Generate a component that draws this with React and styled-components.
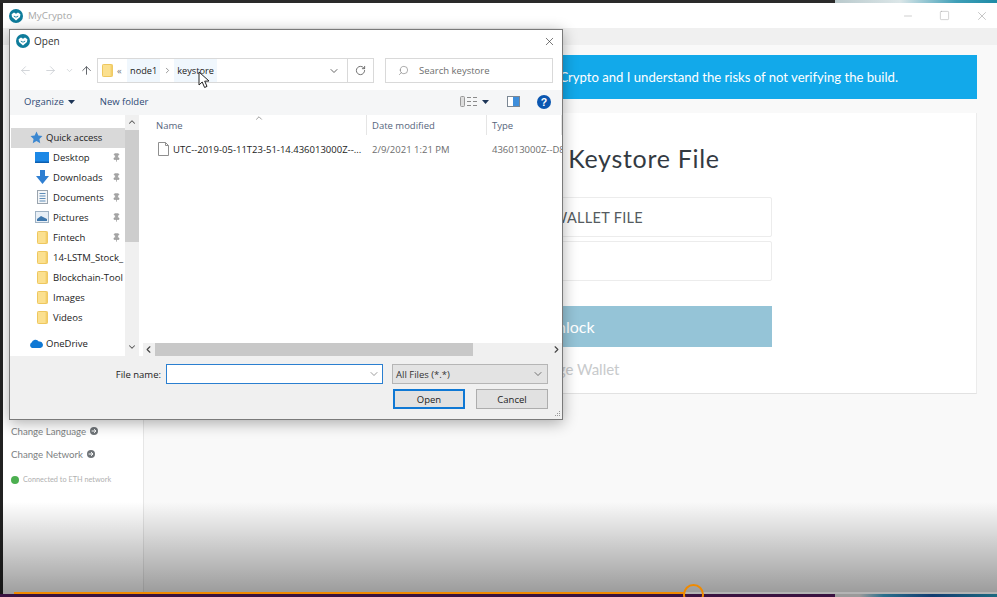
import React from 'react'
import styled, { createGlobalStyle } from 'styled-components'
import { ArrowLeft, ArrowRight, ArrowUp, ChevronDown, ChevronUp, ChevronLeft, ChevronRight, RotateCw, Search, X, Minus, Square, Pin } from 'lucide-react'

const Global = createGlobalStyle`
  html, body { margin: 0; padding: 0; background: #222; }
  * { box-sizing: border-box; }
  svg { flex: none; }
`

const Logo = ({ size = 14 }) => (
  <svg width={size} height={size} viewBox="0 0 14 14">
    <circle cx="7" cy="7" r="7" fill="#0e7c9b" />
    <path d="M2.6 5.2 L5 3.6 L7 4.8 L9 3.6 L11.4 5.2 L11 8 L7 11.4 L3 8 Z" fill="#fff" />
    <path d="M4.8 6.6 Q7 8.8 9.2 6.6 L9.2 7.6 Q7 9.6 4.8 7.6 Z" fill="#0e7c9b" />
  </svg>
)

const Folder = ({ w = 11, h = 13 }) => (
  <svg width={w} height={h} viewBox="0 0 11 13">
    <rect x="0.5" y="0.5" width="10" height="12" rx="0.8" fill="#fbe08f" stroke="#eec75e" />
    <rect x="8.6" y="1" width="1.8" height="11" fill="#f3cf6c" />
  </svg>
)

const Star = () => (
  <svg width="13" height="13" viewBox="0 0 24 24"><path d="M12 1 L15.4 8.4 L23 9.3 L17.4 14.6 L18.9 22.5 L12 18.5 L5.1 22.5 L6.6 14.6 L1 9.3 L8.6 8.4 Z" fill="#3b87d0" /></svg>
)
const DesktopIcon = () => (
  <svg width="14" height="11" viewBox="0 0 14 11"><rect width="14" height="11" fill="#1c88e6" /><rect y="9.5" width="14" height="1.5" fill="#0c5fb0" /></svg>
)
const DownloadIcon = () => (
  <svg width="13" height="14" viewBox="0 0 13 14"><path d="M4 0 H9 V6 H13 L6.5 14 L0 6 H4 Z" fill="#2f7fd2" /></svg>
)
const DocIcon = () => (
  <svg width="11" height="14" viewBox="0 0 11 14"><rect x="0.5" y="0.5" width="10" height="13" fill="#f4f6f8" stroke="#9aa4ae" /><path d="M2.5 3.5H8.5M2.5 6H8.5M2.5 8.5H8.5M2.5 11H8.5" stroke="#5f8db8" /></svg>
)
const PictureIcon = () => (
  <svg width="14" height="12" viewBox="0 0 14 12"><rect x="0.5" y="0.5" width="13" height="11" fill="#e8eff6" stroke="#9fb2c4" /><path d="M2 8 L6 5 L12 8 V10 H2 Z" fill="#3f78ad" /></svg>
)
const CloudIcon = () => (
  <svg width="14" height="9" viewBox="0 0 14 9"><path d="M3 9 A3 3 0 0 1 2.6 3.6 A4 4 0 0 1 9.8 2.6 A3.2 3.2 0 0 1 11.4 9 Z" fill="#0f78d4" /></svg>
)
const FileIcon = () => (
  <svg width="11" height="14" viewBox="0 0 11 14"><path d="M0.5 0.5 H7.5 L10.5 3.5 V13.5 H0.5 Z" fill="#fff" stroke="#8f8f8f" /><path d="M7.5 0.5 V3.5 H10.5" fill="none" stroke="#8f8f8f" /></svg>
)
const Caret = () => (
  <svg width="7" height="4" viewBox="0 0 7 4"><path d="M0 0 H7 L3.5 4 Z" fill="#1d3557" /></svg>
)
const ViewsIcon = () => (
  <svg width="17" height="11" viewBox="0 0 17 11">
    <rect x="0.5" y="0.5" width="4" height="10" rx="1" fill="#ddd" stroke="#999" />
    <path d="M7 1.5H11M7 5.5H11M7 9.5H11M13 1.5H17M13 5.5H17M13 9.5H17" stroke="#8a8a8a" />
  </svg>
)
const PaneIcon = () => (
  <svg width="13" height="11" viewBox="0 0 13 11"><rect x="0.5" y="0.5" width="12" height="10" fill="#fff" stroke="#7b8794" /><rect x="6" y="1" width="6" height="9" fill="#3f8fdc" /></svg>
)
const HelpIcon = () => (
  <svg width="14" height="14" viewBox="0 0 14 14">
    <circle cx="7" cy="7" r="7" fill="#0a56b0" />
    <text x="7" y="11" textAnchor="middle" fontSize="10.5" fontWeight="700" fontFamily="Liberation Sans, sans-serif" fill="#fff">?</text>
  </svg>
)
const Grip = () => (
  <svg width="7" height="7" viewBox="0 0 7 7"><path d="M5 0h1v1H5zM3 2h1v1H3zM5 2h1v1H5zM1 4h1v1H1zM3 4h1v1H3zM5 4h1v1H5z" fill="#9a9a9a" /></svg>
)
const CursorIcon = () => (
  <svg width="13" height="18" viewBox="0 0 13 18"><path d="M1 1 V14 L4.2 11 L6.6 16.5 L9 15.4 L6.7 10.2 L11 10 Z" fill="#fff" stroke="#222" strokeWidth="1" /></svg>
)
const ArrowCircle = () => (
  <svg width="8" height="8" viewBox="0 0 8 8"><circle cx="4" cy="4" r="4" fill="#6f7478" /><path d="M1.6 4H5.6M4 2.2L6 4L4 5.8" stroke="#fff" fill="none" strokeWidth="1" /></svg>
)

const Page = styled.div`
  position: relative;
  width: 997px;
  height: 597px;
  overflow: hidden;
  display: flex;
  flex-direction: column;
  background: #222;
`
const TopStrip = styled.div`
  height: 3px;
  display: flex;
  background: #2a2a2a;
  flex: none;
`
const TopPicture = styled.div`
  margin-left: auto;
  width: 162px;
  background: linear-gradient(90deg, #b9c9cc, #dbe6e8 40%, #3f9fb8 75%, #1d8aa5);
`
const Middle = styled.div`
  flex: 1;
  display: flex;
  min-height: 0;
  padding-left: 3px;
`
const AppWindow = styled.div`
  flex: 1;
  display: flex;
  flex-direction: column;
  background: #fff;
  font-family: Lato, sans-serif;
`
const AppTitle = styled.div`
  height: 25px;
  flex: none;
  display: flex;
  align-items: center;
  padding-left: 6px;
  gap: 5px;
  font-family: "Open Sans", sans-serif;
  font-size: 9.8px;
  color: #a8a8a8;
`
const WindowButtons = styled.div`
  margin-left: auto;
  display: flex;
  align-items: center;
  gap: 25px;
  padding-right: 8px;
  color: #9c9c9c;
`
const MenuStripe = styled.div`
  height: 17px;
  flex: none;
  background: #f0f0f0;
`
const AppBody = styled.div`
  flex: 1;
  display: flex;
  min-height: 0;
`
const Sidebar = styled.div`
  width: 141px;
  flex: none;
  border-right: 1px solid #e6e6e6;
  padding: 374px 0 0 8px;
  display: flex;
  flex-direction: column;
`
const SideLink = styled.div`
  height: 23px;
  display: flex;
  align-items: center;
  gap: 4px;
  font-size: 9.7px;
  color: #7d7f82;
`
const Connected = styled.div`
  margin-top: 10px;
  display: flex;
  align-items: center;
  gap: 4px;
  font-size: 7.3px;
  color: #b0b0b0;
`
const GreenDot = styled.span`
  width: 8px;
  height: 8px;
  border-radius: 50%;
  background: #4caf50;
`
const Main = styled.div`
  flex: 1;
  background: #f9f9f9;
  padding: 10px 20px 0;
  display: flex;
  flex-direction: column;
  gap: 14px;
`
const Banner = styled.div`
  height: 44px;
  flex: none;
  background: #12a9ea;
  color: #fff;
  font-size: 13.1px;
  display: flex;
  align-items: center;
  justify-content: flex-end;
  padding-right: 79px;
`
const Card = styled.div`
  height: 281px;
  flex: none;
  background: #fff;
  border-bottom: 1px solid #e2e2e2;
  border-right: 1px solid #ececec;
  display: flex;
  flex-direction: column;
  align-items: center;
  padding-top: 29px;
`
const CardTitle = styled.h2`
  margin: 0 0 23px;
  padding-left: 148px;
  font-size: 25px;
  line-height: 32px;
  font-weight: 400;
  color: #333a42;
  letter-spacing: 0.7px;
`
const FileBox = styled.div`
  width: 404px;
  height: 40px;
  flex: none;
  border: 1px solid #ececec;
  border-radius: 2px;
  display: flex;
  align-items: center;
  justify-content: center;
  font-size: 14.5px;
  color: #555b60;
  letter-spacing: 0.3px;
`
const PassBox = styled(FileBox)`
  margin-top: 4px;
`
const UnlockButton = styled.div`
  width: 404px;
  height: 41px;
  margin-top: 25px;
  background: #95c4d7;
  color: #fff;
  font-size: 16px;
  display: flex;
  align-items: center;
  justify-content: center;
`
const ChangeWallet = styled.div`
  margin-top: 13px;
  padding-left: 3px;
  font-size: 15px;
  color: #c8cacc;
`

const Overlay = styled.div`
  position: absolute;
  left: 0;
  right: 0;
  bottom: 3px;
  height: 92px;
  background: linear-gradient(180deg, rgba(0,0,0,0), rgba(0,0,0,0.38));
  pointer-events: none;
`
const BottomStrip = styled.div`
  height: 3px;
  flex: none;
  display: flex;
  background: #3a1240;
`
const BottomPicture = styled.div`
  margin-left: auto;
  width: 162px;
  background: linear-gradient(90deg, #9a9a9a 0 15%, #2a6f8c 30%, #123c70 60%, #1d6a80);
`
const ProgressTrack = styled.div`
  position: absolute;
  left: 14px;
  right: 0;
  top: 592px;
  height: 2px;
  background: #b4b4b4;
`
const ProgressFill = styled.div`
  width: 670px;
  height: 100%;
  background: #f08a00;
`
const ScrubRing = styled.div`
  position: absolute;
  left: 683px;
  top: 584px;
  width: 21px;
  height: 21px;
  border: 2px solid #f08a00;
  border-radius: 50%;
`

const Dialog = styled.div`
  position: absolute;
  left: 9px;
  top: 29px;
  width: 554px;
  height: 391px;
  background: #fff;
  border: 1px solid #7a7a7a;
  box-shadow: 0 3px 14px rgba(0,0,0,0.32);
  display: flex;
  flex-direction: column;
  font-family: "Open Sans", sans-serif;
  font-size: 9.5px;
  color: #222;
`
const DialogTitle = styled.div`
  height: 24px;
  flex: none;
  display: flex;
  align-items: center;
  gap: 4px;
  padding: 0 6px 2px;
  font-size: 10px;
  color: #333;
`
const CloseGlyph = styled.span`
  margin-left: auto;
  display: flex;
  color: #333;
`
const NavRow = styled.div`
  height: 36px;
  flex: none;
  display: flex;
  align-items: center;
  padding-bottom: 3px;
`
const NavArrows = styled.div`
  width: 87px;
  flex: none;
  padding-left: 9px;
  display: flex;
  align-items: center;
  color: #c9cdd2;
`
const UpArrow = styled.span`
  display: flex;
  margin-left: 6px;
  color: #5f6368;
`
const NavGap = styled.span`
  display: flex;
  margin-left: ${p => p.$left}px;
`
const AddressBar = styled.div`
  width: 277px;
  height: 25px;
  flex: none;
  border: 1px solid #d9d9d9;
  display: flex;
  align-items: center;
  padding-left: 4px;
`
const Chevrons = styled.span`
  width: 10px;
  margin-left: 4px;
  font-size: 9.5px;
  color: #777;
`
const Crumb = styled.span`
  height: 23px;
  display: flex;
  align-items: center;
  padding: 0 3px;
  background: #f0f7fd;
  color: #222;
  font-size: 9.2px;
`
const CrumbSep = styled.span`
  width: 14px;
  display: flex;
  justify-content: center;
  color: #777;
`
const AddressEnd = styled.span`
  margin-left: auto;
  display: flex;
  align-items: center;
  height: 100%;
  color: #555;
`
const AddressDrop = styled.span`
  width: 27px;
  display: flex;
  justify-content: center;
  color: #666;
`
const RefreshCell = styled.span`
  width: 26px;
  height: 100%;
  display: flex;
  align-items: center;
  justify-content: center;
  border-left: 1px solid #d9d9d9;
  color: #666;
`
const SearchBox = styled.div`
  width: 168px;
  height: 25px;
  margin-left: 11px;
  flex: none;
  border: 1px solid #d9d9d9;
  display: flex;
  align-items: center;
  gap: 10px;
  padding-left: 12px;
  color: #6d6d6d;
`
const Toolbar = styled.div`
  height: 25px;
  flex: none;
  background: #f5f6f7;
  display: flex;
  align-items: center;
  color: #2f4a75;
  padding: 0 0 2px 14px;
`
const ToolItem = styled.span`
  display: flex;
  align-items: center;
  gap: 4px;
  margin-right: 25px;
`
const ToolIcons = styled.div`
  margin-left: auto;
  padding-right: 11px;
  display: flex;
  align-items: center;
`
const Browser = styled.div`
  flex: 1;
  display: flex;
  min-height: 0;
  padding-left: 1px;
`
const NavPane = styled.div`
  width: 114px;
  flex: none;
  padding-top: 13px;
  overflow: hidden;
`
const NavItem = styled.div`
  height: 20px;
  display: flex;
  align-items: center;
  position: relative;
  white-space: nowrap;
  padding: 0 0 2px ${p => (p.$top ? 16 : 22)}px;
  background: ${p => (p.$selected ? '#d9d9d9' : 'transparent')};
  margin-top: ${p => p.$gap || 0}px;
`
const NavIcon = styled.span`
  width: 18px;
  flex: none;
  display: flex;
  justify-content: center;
  margin-right: ${p => (p.$top ? 1 : 2)}px;
`
const NavLabel = styled.span`
  flex: 1;
`
const PinMark = styled.span`
  width: 13px;
  flex: none;
  display: flex;
  color: #9a9a9a;
`
const VScroll = styled.div`
  width: 14px;
  flex: none;
  background: #f0f0f0;
  display: flex;
  flex-direction: column;
  align-items: center;
  color: #555;
`
const VThumb = styled.div`
  width: 100%;
  height: 112px;
  margin-top: 3px;
  background: #cdcdcd;
`
const VDown = styled.span`
  margin-top: auto;
  display: flex;
  height: 14px;
`
const VUp = styled.span`
  display: flex;
  height: 12px;
  padding-top: 2px;
`
const FilePane = styled.div`
  flex: 1;
  min-width: 0;
  display: flex;
  flex-direction: column;
  padding-left: 4px;
`
const FileList = styled.div`
  flex: 1;
  position: relative;
  overflow: hidden;
`
const SortMark = styled.span`
  position: absolute;
  left: 111px;
  top: -2px;
  display: flex;
  color: #8a8a8a;
`
const HeaderRow = styled.div`
  display: grid;
  grid-template-columns: 224px 120px 1fr;
  height: 20px;
  color: #56657c;
`
const HeaderCell = styled.div`
  display: flex;
  align-items: center;
  padding-left: ${p => p.$pad || 5}px;
  border-right: 1px solid #e5e5e5;
`
const FileRow = styled.div`
  display: grid;
  grid-template-columns: 224px 120px 1fr;
  height: 28px;
  align-items: center;
  white-space: nowrap;
  color: #6d6d6d;
`
const NameCell = styled.div`
  display: flex;
  align-items: center;
  gap: 4px;
  padding-left: 15px;
  color: #222;
`
const DateCell = styled.div`
  padding-left: 5px;
`
const HScroll = styled.div`
  height: 13px;
  flex: none;
  background: #f0f0f0;
  display: flex;
  align-items: center;
  color: #444;
`
const HThumb = styled.div`
  width: 318px;
  height: 100%;
  margin-left: 1px;
  background: #c8c8c8;
`
const HRight = styled.span`
  margin-left: auto;
  display: flex;
`
const Footer = styled.div`
  height: 63px;
  flex: none;
  background: #f0f0f0;
  position: relative;
  display: flex;
  flex-direction: column;
  padding: 8px 14px 0 0;
`
const FooterRow = styled.div`
  display: flex;
  align-items: center;
  justify-content: flex-end;
`
const FileLabel = styled.span`
  margin-right: 5px;
`
const NameInput = styled.div`
  width: 217px;
  height: 20px;
  background: #fff;
  border: 1px solid #2a7fd0;
  display: flex;
  align-items: center;
  justify-content: flex-end;
  padding-right: 2px;
  color: #666;
`
const TypeSelect = styled.div`
  width: 156px;
  height: 20px;
  margin-left: 9px;
  background: #e3e3e3;
  border: 1px solid #b5b5b5;
  display: flex;
  align-items: center;
  justify-content: space-between;
  padding: 0 3px 0 3px;
  color: #333;
`
const ButtonRow = styled(FooterRow)`
  margin-top: 5px;
  gap: 11px;
`
const DialogButton = styled.div`
  width: 72px;
  height: 20px;
  background: #e1e1e1;
  border: ${p => (p.$primary ? '2px solid #0f78d4' : '1px solid #adadad')};
  display: flex;
  align-items: center;
  justify-content: center;
  color: #222;
`
const GripCorner = styled.span`
  position: absolute;
  right: 1px;
  bottom: 1px;
  display: flex;
`
const Cursor = styled.span`
  position: absolute;
  left: 198px;
  top: 71px;
  display: flex;
`

const navItems = [
  { label: 'Desktop', icon: <DesktopIcon />, pin: true },
  { label: 'Downloads', icon: <DownloadIcon />, pin: true },
  { label: 'Documents', icon: <DocIcon />, pin: true },
  { label: 'Pictures', icon: <PictureIcon />, pin: true },
  { label: 'Fintech', icon: <Folder />, pin: true },
  { label: '14-LSTM_Stock_', icon: <Folder /> },
  { label: 'Blockchain-Tool', icon: <Folder /> },
  { label: 'Images', icon: <Folder /> },
  { label: 'Videos', icon: <Folder /> },
]

function OpenDialog() {
  return (
    <Dialog>
      <DialogTitle>
        <Logo />
        Open
        <CloseGlyph><X size={13} strokeWidth={1.2} /></CloseGlyph>
      </DialogTitle>
      <NavRow>
        <NavArrows>
          <ArrowLeft size={13} strokeWidth={1.5} />
          <NavGap $left={12}><ArrowRight size={13} strokeWidth={1.5} /></NavGap>
          <NavGap $left={8}><ChevronDown size={9} /></NavGap>
          <UpArrow><ArrowUp size={13} strokeWidth={1.8} /></UpArrow>
        </NavArrows>
        <AddressBar>
          <Folder />
          <Chevrons>«</Chevrons>
          <Crumb>node1</Crumb>
          <CrumbSep><ChevronRight size={9} /></CrumbSep>
          <Crumb>keystore</Crumb>
          <AddressEnd>
            <AddressDrop><ChevronDown size={12} /></AddressDrop>
            <RefreshCell><RotateCw size={11} /></RefreshCell>
          </AddressEnd>
        </AddressBar>
        <SearchBox>
          <Search size={11} strokeWidth={1.2} style={{ transform: 'scaleX(-1)' }} />
          Search keystore
        </SearchBox>
      </NavRow>
      <Toolbar>
        <ToolItem>Organize <Caret /></ToolItem>
        <ToolItem>New folder</ToolItem>
        <ToolIcons>
          <ViewsIcon />
          <NavGap $left={5}><Caret /></NavGap>
          <NavGap $left={18}><PaneIcon /></NavGap>
          <NavGap $left={17}><HelpIcon /></NavGap>
        </ToolIcons>
      </Toolbar>
      <Browser>
        <NavPane>
          <NavItem $selected $top>
            <NavIcon $top><Star /></NavIcon>
            <NavLabel>Quick access</NavLabel>
          </NavItem>
          {navItems.map(item => (
            <NavItem key={item.label}>
              <NavIcon>{item.icon}</NavIcon>
              <NavLabel>{item.label}</NavLabel>
              {item.pin && <PinMark><Pin size={9} fill="#a5a5a5" /></PinMark>}
            </NavItem>
          ))}
          <NavItem $top $gap={6}>
            <NavIcon $top><CloudIcon /></NavIcon>
            <NavLabel>OneDrive</NavLabel>
          </NavItem>
        </NavPane>
        <VScroll>
          <VUp><ChevronUp size={10} strokeWidth={2.5} /></VUp>
          <VThumb />
          <VDown><ChevronDown size={10} strokeWidth={2.5} /></VDown>
        </VScroll>
        <FilePane>
          <FileList>
            <SortMark><ChevronUp size={10} /></SortMark>
            <HeaderRow>
              <HeaderCell $pad={13}>Name</HeaderCell>
              <HeaderCell>Date modified</HeaderCell>
              <HeaderCell>Type</HeaderCell>
            </HeaderRow>
            <FileRow>
              <NameCell><FileIcon />UTC--2019-05-11T23-51-14.436013000Z--...</NameCell>
              <DateCell>2/9/2021 1:21 PM</DateCell>
              <DateCell>436013000Z--D8</DateCell>
            </FileRow>
          </FileList>
          <HScroll>
            <ChevronLeft size={11} strokeWidth={2.5} />
            <HThumb />
            <HRight><ChevronRight size={11} strokeWidth={2.5} /></HRight>
          </HScroll>
        </FilePane>
      </Browser>
      <Footer>
        <FooterRow>
          <FileLabel>File name:</FileLabel>
          <NameInput><ChevronDown size={12} strokeWidth={1.3} /></NameInput>
          <TypeSelect>All Files (*.*)<ChevronDown size={12} strokeWidth={1.3} /></TypeSelect>
        </FooterRow>
        <ButtonRow>
          <DialogButton $primary>Open</DialogButton>
          <DialogButton>Cancel</DialogButton>
        </ButtonRow>
        <GripCorner><Grip /></GripCorner>
      </Footer>
    </Dialog>
  )
}

export default function App() {
  return (
    <Page>
      <Global />
      <TopStrip><TopPicture /></TopStrip>
      <Middle>
        <AppWindow>
          <AppTitle>
            <Logo />
            MyCrypto
            <WindowButtons>
              <Minus size={12} strokeWidth={1} />
              <Square size={11} strokeWidth={1} />
              <X size={14} strokeWidth={1} />
            </WindowButtons>
          </AppTitle>
          <MenuStripe />
          <AppBody>
            <Sidebar>
              <SideLink>Change Language <ArrowCircle /></SideLink>
              <SideLink>Change Network <ArrowCircle /></SideLink>
              <Connected><GreenDot />Connected to ETH network</Connected>
            </Sidebar>
            <Main>
              <Banner>Crypto and I understand the risks of not verifying the build.</Banner>
              <Card>
                <CardTitle>Keystore File</CardTitle>
                <FileBox>SELECT WALLET FILE</FileBox>
                <PassBox />
                <UnlockButton>Unlock</UnlockButton>
                <ChangeWallet>Change Wallet</ChangeWallet>
              </Card>
            </Main>
          </AppBody>
        </AppWindow>
      </Middle>
      <BottomStrip><BottomPicture /></BottomStrip>
      <Overlay />
      <ProgressTrack><ProgressFill /></ProgressTrack>
      <ScrubRing />
      <OpenDialog />
      <Cursor><CursorIcon /></Cursor>
    </Page>
  )
}
